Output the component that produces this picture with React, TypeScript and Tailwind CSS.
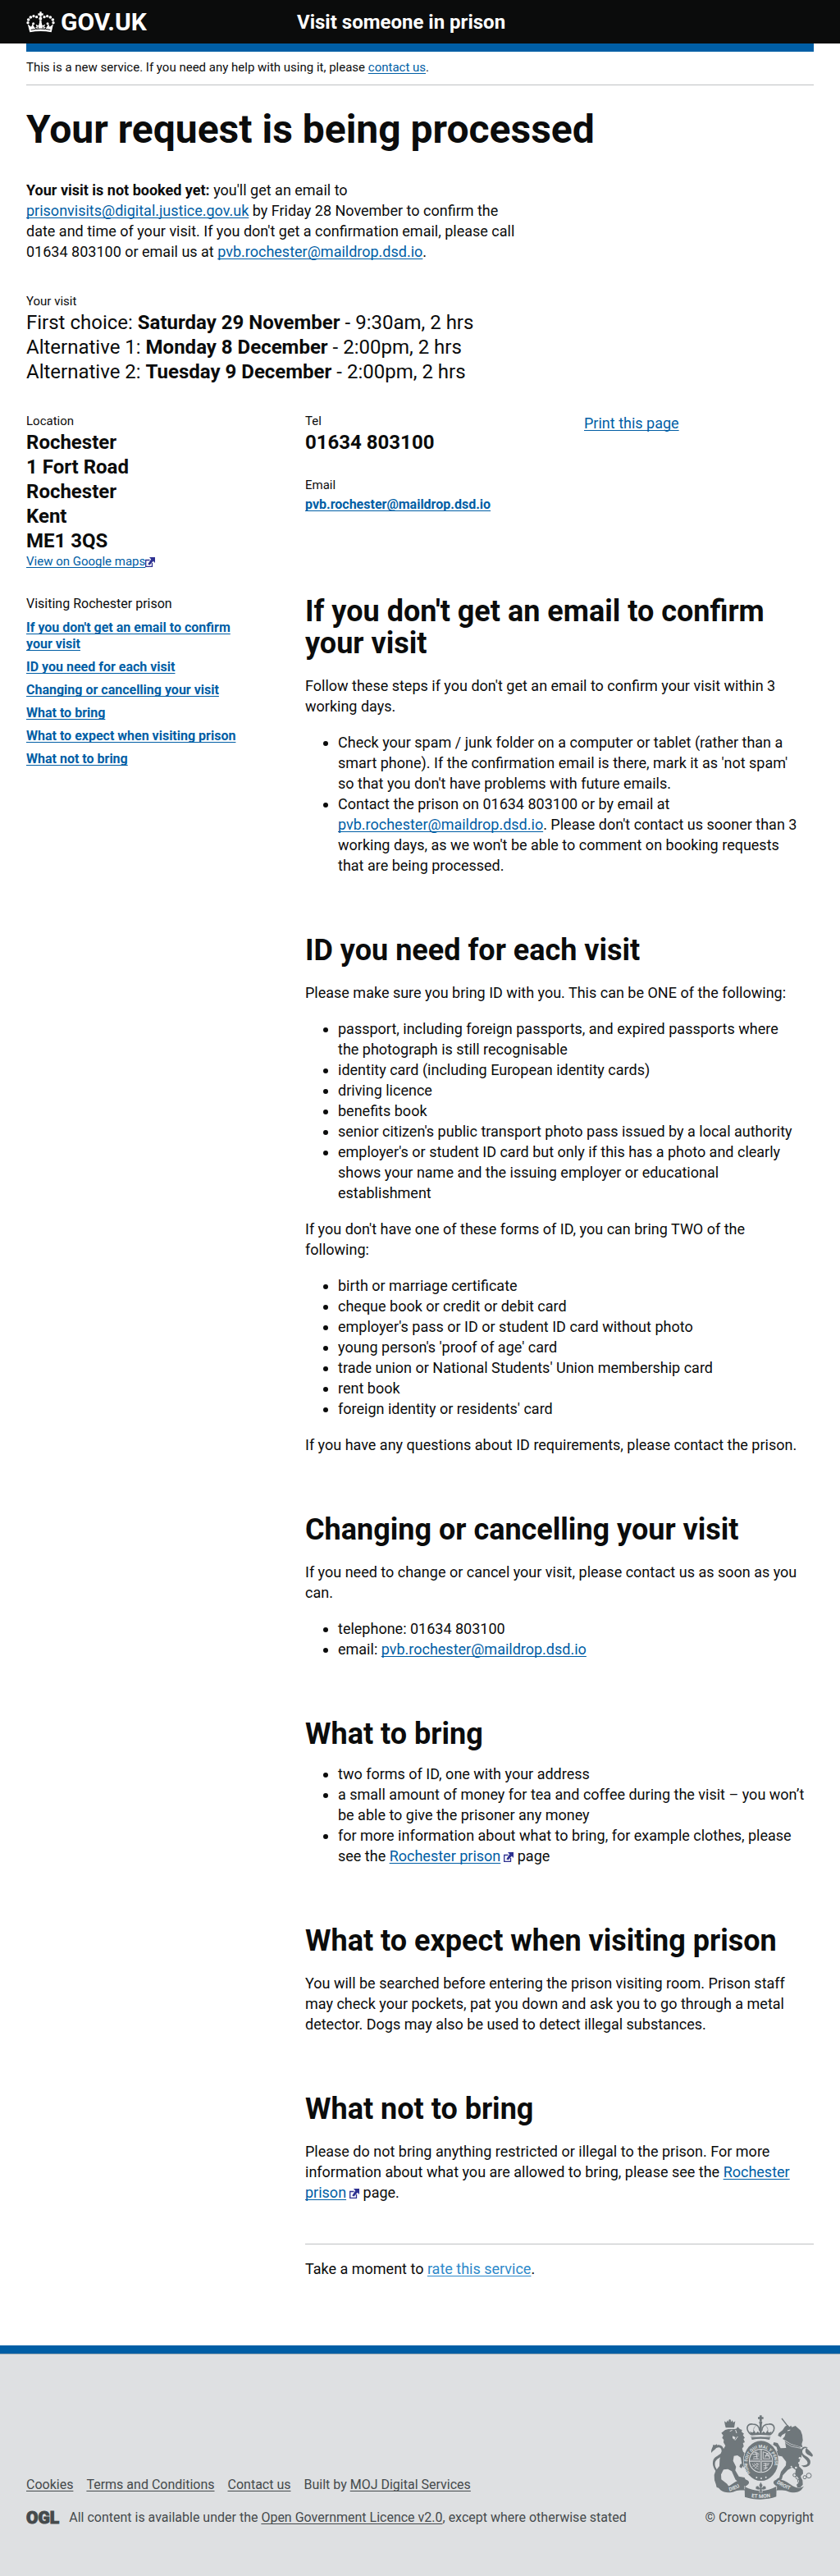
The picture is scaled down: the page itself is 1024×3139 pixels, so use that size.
import React from 'react';

const linkClass =
  'text-[#005ea5] underline decoration-1 underline-offset-2 [text-decoration-skip-ink:none]';
const footerLinkClass =
  'underline decoration-1 underline-offset-2 [text-decoration-skip-ink:none]';

function CrownIcon() {
  return (
    <svg viewBox="36 38 105 78" className="h-[26px] w-[35px]" aria-hidden="true">
      <g fill="#fff">
        <path d="M85 39h7v6h6v7h-6v6h-7v-6h-6v-7h6z" />
        <path d="M49 114 41 84l13 10 5-10 8 14 7-3-3-10 10 5 5-18h4l5 18 10-5-3 10 7 3 8-14 5 10 13-10-7 30c-26-5-53-5-79 0z" />
        <circle cx="88" cy="64" r="6" />
        <circle cx="74" cy="58" r="5" />
        <circle cx="102" cy="58" r="5" />
        <circle cx="63" cy="55" r="5" />
        <circle cx="113" cy="55" r="5" />
        <circle cx="52" cy="59" r="5.5" />
        <circle cx="124" cy="59" r="5.5" />
        <circle cx="44" cy="68" r="5.5" />
        <circle cx="133" cy="68" r="5.5" />
        <circle cx="42" cy="79" r="5" />
        <circle cx="135" cy="79" r="5" />
        <circle cx="62" cy="82" r="4.5" />
        <circle cx="114" cy="82" r="4.5" />
        <path d="M84 70h8l-2 14h-4z" />
      </g>
      <g fill="none" stroke="#0b0c0c" strokeWidth="3">
        <path d="M53 105c23-5 48-5 71 0" />
        <path d="M79 93v7M97 93v7M69 99l5 2M108 99l-5 2" />
      </g>
    </svg>
  );
}

function ExternalIcon({ tight = false }: { tight?: boolean }) {
  return (
    <svg
      viewBox="0 0 12 12"
      className={tight ? 'inline h-3 w-3 align-[-2px]' : 'ml-1 inline h-3 w-3 align-[-1px]'}
      aria-hidden="true"
    >
      <path d="M5.5 3.5H.7v7.8h7.8V7" fill="none" stroke="#2e3191" strokeWidth="1.3" />
      <path d="M5 0h7v7L9.8 4.8 5.6 9.6 3.2 8.4l4-5.8z" fill="#2e3191" />
    </svg>
  );
}

function Crest() {
  return (
    <svg viewBox="80 70 378 309" className="h-[103px] w-[126px]" role="img" aria-label="Royal coat of arms">
      <defs>
        <path id="garter" d="M226 281A50 56 0 1 1 304 281" />
        <path id="motto-left" d="M150 348Q178 342 205 320" />
        <path id="motto-centre" d="M230 370Q264 376 308 368" />
        <path id="motto-right" d="M322 318Q345 337 384 347" />
      </defs>
      <g fill="#6f777b">
        {/* lion */}
        <circle cx="151" cy="90" r="4" />
        <path d="M133 104l-2-12 7 5 5-8 3 6 5-9 5 9 4-6 4 8 7-5-2 12-2 12h-31z" />
        <path d="M134 124l14-4 26 0 6-7 8 8 8 3-2 7 9 7-4 5 7 10-5 4 5 12-7 3 3 12-6 8 4 12 10 8 6 13-4 6 5 10-5 18-9 3-5-6-4 8-8-5 3-9 6-3-4-22-12-8-13 2-3 18 11 22-3 13 13 22 21 4 4 9-8 8-17 0-12-9-14-31-14-8-16 2-9 18 1 18 21 16 8 12-9 8-12-2-6 3-10-6-9-2-3-12-5-14-1-20 5-14 14-18 1-24 7-27 14-23-7-12 1-10-6-7 4-9-7-9z" />
        <path d="M84 208c-4-12 6-20 6-30 7 3 11 0 14-2 2 11-4 17-9 21-4 4-8 5-11 11z" />
        <path d="M98 184c14-12 29-1 32 14 2 17-11 25-21 30-10 6-15 14-11 30l10 20-8-3c-14-18-15-40-2-51 9-8 23-11 23-23 0-12-9-17-19-11z" />
        {/* imperial crown */}
        <path d="M260 71h8v6h6v7h-6v7h-8v-7h-6v-7h6z" />
        <circle cx="264" cy="97" r="6" />
        <path d="M228 148h72l-4 12c-21-5-43-5-64 0z" />
        <path d="M260 100h8v42h-8zM230 144l-6-14 10 4 6-8 6 10 8-7 10 13 10-13 8 7 6-10 6 8 10-4-6 14c-22-3-46-3-68 0z" />
        {/* unicorn */}
        <path d="M341 82l31 40" stroke="#6f777b" strokeWidth="4" />
        <path d="M369 113l6-5 3 6 13-5 10 9 9 8 6 17 2 19-4 14 3 12-16-5-26-8-20-12-11-6 8-10 3-12-13 8-5 7-10-5 3-9 14-11 9-14 10-5z" />
        <path d="M352 164l24 13 32 9 6 12-1 24-7 15-2 20 14 14 1 13-10 10 8 14 1 16-9 10h-11l-3-10 9-8-1-14-13-15 2-17-13-9-16 9-18 20-4 15-14 6-6-6 11-7 6-21 18-23 1-14-15-19-24-4-14-15-1-11-9-3-1-13 12 2 7 19 14 6-4-16-13-8 3-9 14 3 11 19 20-1z" />
        <path d="M452 222c-8-4-17-6-22-13-5-9-1-18 2-20 4 8 17 13 23 28z" />
        <path d="M410 200c6-18 18-16 27-11-13 0-21 4-21 15 0 14 24 15 29 32 4 16-8 25-24 24l-9-7c18 3 25-3 23-11-3-13-25-17-25-42z" />
        {/* ribbon */}
        <path d="M105 330c18 9 35 7 53-7 16-12 32-19 50-18 10 3 17 10 11 17-6 8-16 5-11 23-13-1-26-1-38 3-15 6-39 8-53-4z" />
        <path d="M422 330c-16 9-33 7-50-7-16-12-32-19-48-18-10 3-17 10-11 17 6 8 14 5 9 23 13-1 28-1 40 3 15 6 37 8 50-4z" />
        <path d="M205 331c37 20 82 20 117-1l-1 38c-34 13-79 13-115 1z" />
      </g>
      <g stroke="#dee0e2" fill="none" strokeWidth="3">
        <path d="M131 119h39M160 125l-9 4M172 124l4 12M180 148l-10 14" />
        <path d="M205 328v13M322 328v13" strokeWidth="2" />
        <path d="M229 151q35-5 70 0M350 168l26 16 34 7" strokeWidth="2" />
        <path d="M362 127l10-3" />
      </g>
      <path d="M161 146l11 5-4 9-7-6z" fill="#dee0e2" />
      <g fill="none" stroke="#6f777b" strokeWidth="5">
        <path d="M229 142c-26-24-12-42 6-39 14 0 24 8 25 24M299 142c26-24 12-42-6-39-14 0-24 8-25 24" />
        <path d="M242 140c-7-14-5-23 4-31M286 140c7-14 5-23-4-31" strokeDasharray="4 3" strokeWidth="3" />
      </g>
      {/* garter and shield */}
      <ellipse cx="265" cy="237" rx="65" ry="75" fill="#dee0e2" />
      <ellipse cx="265" cy="237" rx="63" ry="73" fill="#6f777b" />
      <circle cx="265" cy="237" r="44" fill="#dee0e2" />
      <circle cx="265" cy="237" r="41" fill="#6f777b" />
      <g stroke="#dee0e2" fill="none" strokeWidth="3">
        <path d="M265 196v82M224 237h82" strokeWidth="6" />
        <path d="M234 213h24M237 223l20-4M236 229h22M240 206l16 3M247 203l4 27" strokeWidth="2.5" />
        <path d="M273 229v-25l22 8 3 17zM280 225l7-16 7 15M279 218h15" strokeWidth="2.5" />
        <path d="M233 247c5 10 14 17 24 21M240 245c4 7 10 12 17 15M247 244l10 8M234 258l22-13M242 267l14-18" strokeWidth="2" />
        <path d="M273 247h23M273 255l20-3M274 262h16M274 269l9-3M281 244l3 24" strokeWidth="2.5" />
      </g>
      <path d="M265 196v82M224 237h82" stroke="#6f777b" strokeWidth="2" />
      <g fill="#dee0e2">
        <circle cx="249" cy="298" r="3" />
        <circle cx="266" cy="301" r="3" />
        <circle cx="283" cy="297" r="3" />
      </g>
      {/* fleur-de-lis */}
      <path
        d="M264 314l7 12-3 10 7-8 8 3 1 8-9 4-7-1 3 10h-13l3-10-7 1-9-4 1-8 8-3 7 8-3-10z"
        fill="#6f777b"
        stroke="#dee0e2"
        strokeWidth="1.5"
      />
      {/* chain */}
      <g fill="none" stroke="#6f777b" strokeWidth="3">
        <circle cx="388" cy="289" r="6" />
        <circle cx="401" cy="296" r="9" />
        <circle cx="425" cy="297" r="6" />
        <circle cx="440" cy="291" r="9" />
        <circle cx="405" cy="311" r="6" />
      </g>
      <g fill="#dee0e2">
        <circle cx="407" cy="227" r="4" />
        <circle cx="405" cy="245" r="4" />
        <circle cx="393" cy="262" r="4" />
        <circle cx="376" cy="258" r="3" />
      </g>
      <g fill="#dee0e2" fontFamily="Roboto, sans-serif" fontWeight="700" fontSize="19">
        <text fontSize="16">
          <textPath href="#garter">HONI SOIT QUI MAL Y PENSE</textPath>
        </text>
        <text><textPath href="#motto-left">DIEU</textPath></text>
        <text><textPath href="#motto-centre">ET MON</textPath></text>
        <text><textPath href="#motto-right">DROIT</textPath></text>
      </g>
    </svg>
  );
}

function EmailLink() {
  return (
    <a href="mailto:pvb.rochester@maildrop.dsd.io" className={linkClass}>
      pvb.rochester@maildrop.dsd.io
    </a>
  );
}

function Section({ id, title, children }: { id: string; title: string; children: React.ReactNode }) {
  return (
    <section id={id} className="mb-18">
      <h2 className="mb-[19px] text-4xl/[39px] font-bold">{title}</h2>
      <div className="flex flex-col gap-[19px]">{children}</div>
    </section>
  );
}

function Bullets({ items, raised = false }: { items: React.ReactNode[]; raised?: boolean }) {
  return (
    <ul className={raised ? '-mt-[3px] list-disc pl-10' : 'list-disc pl-10'}>
      {items.map((item, i) => (
        <li key={i}>{item}</li>
      ))}
    </ul>
  );
}

const sections = [
  { id: 'no-email', title: "If you don't get an email to confirm your visit" },
  { id: 'id-needed', title: 'ID you need for each visit' },
  { id: 'changing', title: 'Changing or cancelling your visit' },
  { id: 'what-to-bring', title: 'What to bring' },
  { id: 'what-to-expect', title: 'What to expect when visiting prison' },
  { id: 'what-not-to-bring', title: 'What not to bring' },
];

const choices = [
  { label: 'First choice:', date: 'Saturday 29 November', time: '9:30am, 2 hrs' },
  { label: 'Alternative 1:', date: 'Monday 8 December', time: '2:00pm, 2 hrs' },
  { label: 'Alternative 2:', date: 'Tuesday 9 December', time: '2:00pm, 2 hrs' },
];

export default function App() {
  return (
    <div className="bg-white font-[Roboto,'Liberation_Sans',sans-serif] text-lg/[25px] text-[#0b0c0c]">
      <header className="bg-[#0b0c0c] text-white">
        <div className="mx-8 grid h-[53px] grid-cols-[330px_1fr] items-center">
          <a href="#home" className="flex items-center gap-[7px] text-3xl/[30px] font-bold">
            <CrownIcon />
            GOV.UK
          </a>
          <a href="#service" className="text-2xl/[30px] font-bold">Visit someone in prison</a>
        </div>
      </header>

      <main className="mx-8">
        <div className="h-[10px] bg-[#005ea5]" />
        <p className="border-b border-[#bfc1c3] pt-[9px] pb-[11px] text-[15px]/5">
          This is a new service. If you need any help with using it, please{' '}
          <a href="#contact" className={linkClass}>contact us</a>.
        </p>

        <h1 className="mt-[29px] text-5xl/[50px] font-bold">Your request is being processed</h1>

        <div className="grid grid-cols-3 gap-x-15">
          <p className="col-span-2 mt-9 pr-4">
            <strong>Your visit is not booked yet:</strong> you'll get an email to{' '}
            <a href="mailto:prisonvisits@digital.justice.gov.uk" className={linkClass}>
              prisonvisits@digital.justice.gov.uk
            </a>{' '}
            by Friday 28 November to confirm the date and time of your visit. If you don't get a
            confirmation email, please call 01634&nbsp;803100 or email us at <EmailLink />.
          </p>
        </div>

        <section className="mt-[38px]">
          <h2 className="text-[15px]/5">Your visit</h2>
          <ul className="mt-px text-2xl/[30px]">
            {choices.map((c) => (
              <li key={c.label}>
                {c.label} <strong>{c.date}</strong> - {c.time}
              </li>
            ))}
          </ul>
        </section>

        <div className="mt-[35px] grid grid-cols-3 gap-x-15">
          <section>
            <h2 className="text-[15px]/5">Location</h2>
            <address className="mt-px text-2xl/[30px] font-bold not-italic">
              Rochester<br />
              1 Fort Road<br />
              Rochester<br />
              Kent<br />
              ME1 3QS
            </address>
            <p className="text-[15px]/[21px]">
              <a href="#map" className={linkClass}>View on Google maps<ExternalIcon tight /></a>
            </p>
          </section>
          <section>
            <h2 className="text-[15px]/5">Tel</h2>
            <p className="mt-px text-2xl/[30px] font-bold">01634 803100</p>
            <h2 className="mt-[27px] text-[15px]/5">Email</h2>
            <p className="mt-1 text-base/5 font-bold"><EmailLink /></p>
          </section>
          <p>
            <a href="#print" className={linkClass}>Print this page</a>
          </p>
        </div>

        <div className="mt-[31px] grid grid-cols-3 gap-x-15">
          <nav aria-labelledby="nav-title" className="text-base/5">
            <h2 id="nav-title">Visiting Rochester prison</h2>
            <ul className="mt-[9px] flex flex-col gap-2 font-bold">
              {sections.map((s) => (
                <li key={s.id}>
                  <a href={`#${s.id}`} className={linkClass}>{s.title}</a>
                </li>
              ))}
            </ul>
          </nav>

          <div className="col-span-2">
            <Section {...sections[0]}>
              <p>Follow these steps if you don't get an email to confirm your visit within 3 working days.</p>
              <Bullets
                items={[
                  "Check your spam / junk folder on a computer or tablet (rather than a smart phone). If the confirmation email is there, mark it as 'not spam' so\u00a0that you don't have problems with future emails.",
                  <>
                    Contact the prison on 01634 803100 or by email at <EmailLink />. Please don't
                    contact us sooner than 3 working days, as we won't be able to comment on booking
                    requests that&nbsp;are being processed.
                  </>,
                ]}
              />
            </Section>

            <Section {...sections[1]}>
              <p>Please make sure you bring ID with you. This can be ONE of the following:</p>
              <Bullets
                items={[
                  'passport, including foreign passports, and expired passports where the\u00a0photograph is still recognisable',
                  'identity card (including European identity cards)',
                  'driving licence',
                  'benefits book',
                  "senior citizen's public transport photo pass issued by a local authority",
                  "employer's or student ID card but only if this has a photo and clearly shows your name and the issuing employer or educational establishment",
                ]}
              />
              <p className="pr-4">
                If you don't have one of these forms of ID, you can bring TWO of the following:
              </p>
              <Bullets
                items={[
                  'birth or marriage certificate',
                  'cheque book or credit or debit card',
                  "employer's pass or ID or student ID card without photo",
                  "young person's 'proof of age' card",
                  "trade union or National Students' Union membership card",
                  'rent book',
                  "foreign identity or residents' card",
                ]}
              />
              <p>If you have any questions about ID requirements, please contact the prison.</p>
            </Section>

            <Section {...sections[2]}>
              <p>If you need to change or cancel your visit, please contact us as soon as you can.</p>
              <Bullets items={['telephone: 01634 803100', <>email: <EmailLink /></>]} />
            </Section>

            <Section {...sections[3]}>
              <Bullets
                raised
                items={[
                  'two forms of ID, one with your address',
                  'a small amount of money for tea and coffee during the visit – you won’t be able to give the prisoner any money',
                  <>
                    for more information about what to bring, for example clothes, please see the{' '}
                    <a href="#prison" className={linkClass}>Rochester prison<ExternalIcon /></a> page
                  </>,
                ]}
              />
            </Section>

            <Section {...sections[4]}>
              <p>
                You will be searched before entering the prison visiting room. Prison staff may check
                your pockets, pat you down and ask you to go through a metal detector. Dogs may also
                be used to detect illegal substances.
              </p>
            </Section>

            <Section {...sections[5]}>
              <p>
                Please do not bring anything restricted or illegal to the prison. For more
                information about what you are allowed to bring, please see the{' '}
                <a href="#prison" className={linkClass}>Rochester prison<ExternalIcon /></a> page.
              </p>
            </Section>

            <p className="-mt-[22px] border-t border-[#bfc1c3] pt-[17px]">
              Take a moment to{' '}
              <a
                href="#rate"
                className="text-[#2e8aca] underline decoration-1 underline-offset-2 [text-decoration-skip-ink:none]"
              >
                rate this service
              </a>
              .
            </p>
          </div>
        </div>
      </main>

      <footer className="mt-[81px] border-t-10 border-[#005ea5] bg-[#dee0e2] text-base/5 text-[#454a4c]">
        <div className="flex items-end justify-between border-t border-[#a1acb2] px-8 pt-[74px] pb-[61px]">
          <div className="flex flex-col gap-5">
            <ul className="flex gap-4">
              <li><a href="#cookies" className={footerLinkClass}>Cookies</a></li>
              <li><a href="#terms" className={footerLinkClass}>Terms and Conditions</a></li>
              <li><a href="#contact" className={footerLinkClass}>Contact us</a></li>
              <li>Built by <a href="#moj" className={footerLinkClass}>MOJ Digital Services</a></li>
            </ul>
            <div className="flex items-center gap-3">
              <span className="text-[21px]/5 font-black [-webkit-text-stroke:1px_#454a4c]">OGL</span>
              <p>
                All content is available under the{' '}
                <a href="#licence" className={footerLinkClass}>Open Government Licence v2.0</a>,
                except where otherwise stated
              </p>
            </div>
          </div>
          <a href="#copyright" className="flex flex-col items-end gap-3">
            <Crest />
            © Crown copyright
          </a>
        </div>
      </footer>
    </div>
  );
}
